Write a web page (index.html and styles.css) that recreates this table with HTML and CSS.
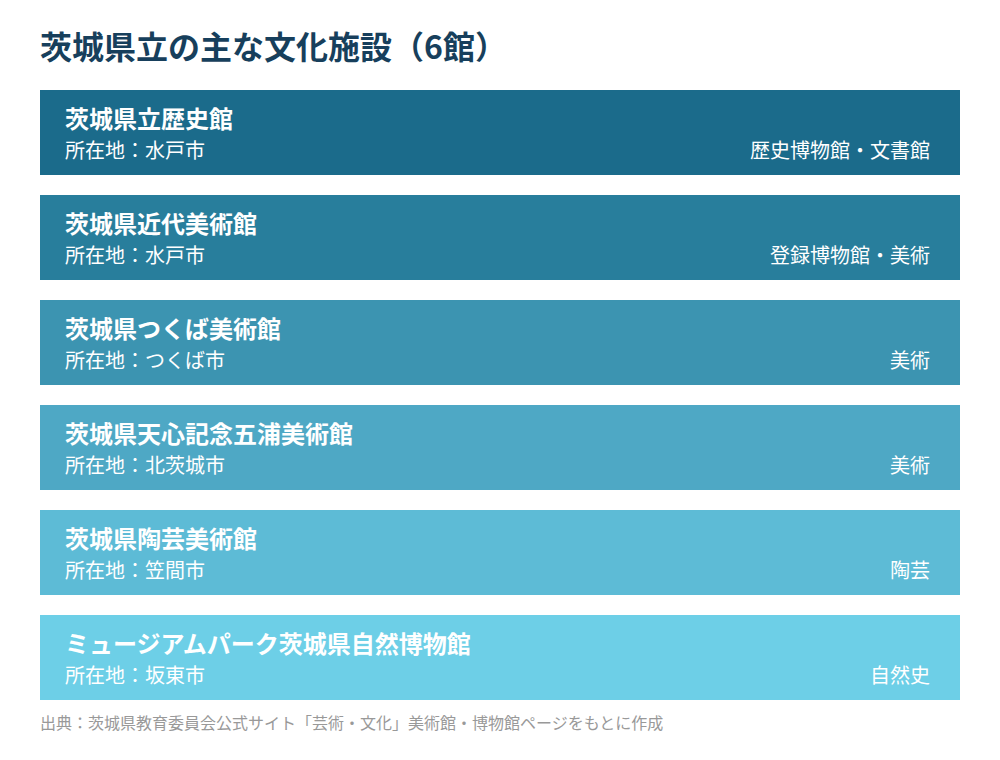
FILE: index.html
```html
<!DOCTYPE html>
<html lang="ja">
<head>
<meta charset="utf-8">
<title>茨城県立の主な文化施設</title>
<link rel="stylesheet" href="styles.css">
</head>
<body>
<main class="page">
  <h1 class="title">茨城県立の主な文化施設（6館）</h1>
  <ul class="list">
    <li class="card c1">
      <div class="name">茨城県立歴史館</div>
      <div class="meta"><span>所在地：水戸市</span><span>歴史博物館・文書館</span></div>
    </li>
    <li class="card c2">
      <div class="name">茨城県近代美術館</div>
      <div class="meta"><span>所在地：水戸市</span><span>登録博物館・美術</span></div>
    </li>
    <li class="card c3">
      <div class="name">茨城県つくば美術館</div>
      <div class="meta"><span>所在地：つくば市</span><span>美術</span></div>
    </li>
    <li class="card c4">
      <div class="name">茨城県天心記念五浦美術館</div>
      <div class="meta"><span>所在地：北茨城市</span><span>美術</span></div>
    </li>
    <li class="card c5">
      <div class="name">茨城県陶芸美術館</div>
      <div class="meta"><span>所在地：笠間市</span><span>陶芸</span></div>
    </li>
    <li class="card c6">
      <div class="name">ミュージアムパーク茨城県自然博物館</div>
      <div class="meta"><span>所在地：坂東市</span><span>自然史</span></div>
    </li>
  </ul>
  <p class="source">出典：茨城県教育委員会公式サイト「芸術・文化」美術館・博物館ページをもとに作成</p>
</main>
</body>
</html>
```

FILE: styles.css
```css
* { box-sizing: border-box; }
html, body {
  margin: 0;
  padding: 0;
  background: #ffffff;
  font-family: "Noto Sans CJK JP", "Noto Sans", sans-serif;
}
.page {
  padding: 0 40px;
}
.title {
  margin: 25px 0 25px;
  font-size: 32px;
  line-height: 40px;
  font-weight: 700;
  color: #173f5c;
}
.list {
  list-style: none;
  margin: 0;
  padding: 0;
  display: flex;
  flex-direction: column;
  gap: 20px;
}
.card {
  height: 85px;
  padding: 12px 30px 11px 25px;
  color: #ffffff;
}
.name {
  font-size: 24px;
  line-height: 32px;
  font-weight: 700;
}
.meta {
  margin-top: 2px;
  display: flex;
  justify-content: space-between;
  align-items: baseline;
  font-size: 20px;
  line-height: 28px;
}
.c1 { background: #1b6b8b; }
.c2 { background: #287e9c; }
.c3 { background: #3c94b1; }
.c4 { background: #4ea8c5; }
.c5 { background: #5dbbd6; }
.c6 { background: #6dcfe7; }
.source {
  margin: 11px 0 0;
  font-size: 16px;
  line-height: 22px;
  color: #999999;
}
```
